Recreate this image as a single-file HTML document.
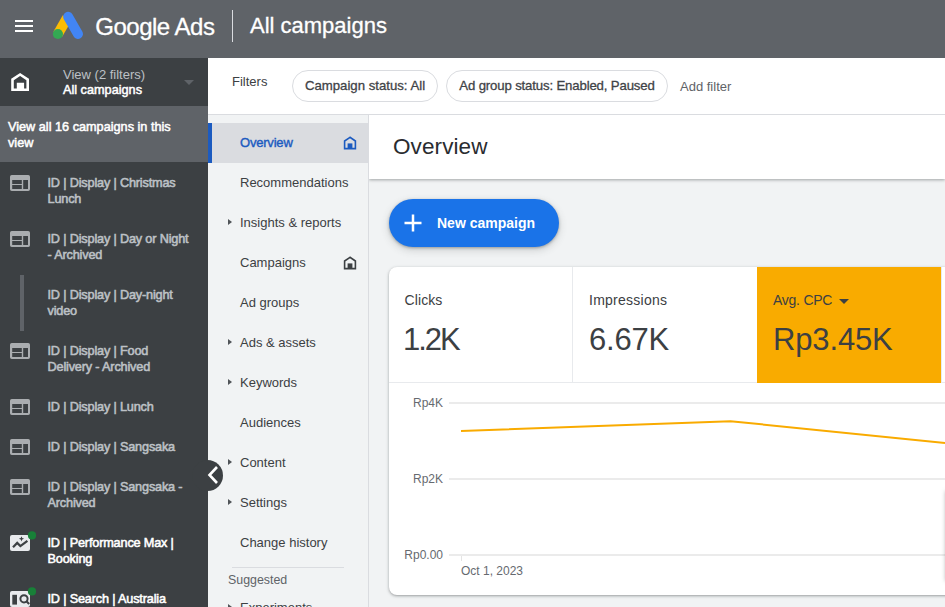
<!DOCTYPE html>
<html><head><meta charset="utf-8">
<style>
*{box-sizing:border-box;margin:0;padding:0}
html,body{width:945px;height:607px;overflow:hidden;background:#f1f3f4;font-family:"Liberation Sans",sans-serif;}
body{position:relative}
.abs{position:absolute}
#hdr{left:0;top:0;width:945px;height:58px;background:#5f6368}
#side{left:0;top:58px;width:208px;height:549px;background:#3c4043}
#banner{left:0;top:48px;width:208px;height:56px;background:#5f6368;color:#fff;font-size:12.7px;-webkit-text-stroke:.5px;line-height:16px;padding:13px 8px;white-space:nowrap}
.t{position:absolute;white-space:nowrap;transform-origin:0 0}
.ci{position:absolute;left:47.5px;margin-top:1px;letter-spacing:-.17px;font-size:12.7px;-webkit-text-stroke:.55px;line-height:16px;color:#bdc1c6;white-space:nowrap}
.ci.w{color:#fff}
#filters{left:208px;top:58px;width:737px;height:57px;background:#fff;border-bottom:1px solid #dadce0}
.chip{position:absolute;top:12px;height:32px;border:1px solid #dadce0;border-radius:16px;font-size:13.2px;letter-spacing:-.15px;-webkit-text-stroke:.3px;color:#3f4347;line-height:30.5px;text-align:center;white-space:nowrap}
#nav{left:208px;top:115px;width:161px;height:492px;background:#f1f3f4;border-right:1px solid #dadce0}
.ni{position:absolute;left:32px;margin-top:1px;font-size:13px;color:#3c4043;white-space:nowrap;line-height:16px}
.tri{position:absolute;left:20.2px;margin-top:1.5px;width:0;height:0;border-left:4.2px solid #505458;border-top:3.5px solid transparent;border-bottom:3.5px solid transparent}
.m1{font-size:14px;line-height:16px;color:#3c4043}
.m2{font-size:31px;line-height:36px;color:#3c4043}
.gl{left:80px;width:496px;height:2px;background:#ebebeb}
.ax{font-size:12px;line-height:14px;color:#666a6f}
</style></head><body>
<div id="hdr" class="abs">
  <svg class="abs" style="left:12px;top:14px" width="24" height="24" viewBox="0 0 24 24"><path fill="#fff" d="M3 6h18v2H3zM3 11h18v2H3zM3 16h18v2H3z"/></svg>
  <svg class="abs" style="left:52px;top:11px" width="34" height="30" viewBox="0 0 34 30">
    <path d="M5.9 23 L15.2 6.9" stroke="#fbbc04" stroke-width="10.2" fill="none"/>
    <path d="M16.1 5.7 L26 23" stroke="#4285f4" stroke-width="9.9" stroke-linecap="round" fill="none"/>
    <circle cx="5.9" cy="23" r="5.1" fill="#34a853"/>
  </svg>
  <div class="t" id="ga" style="left:95.3px;top:12.7px;letter-spacing:-.5px;-webkit-text-stroke:.3px;font-size:24px;line-height:28px;color:#fff">Google Ads</div>
  <div class="abs" style="left:232px;top:10px;width:1px;height:32px;background:#dadce0"></div>
  <div class="t" id="ac" style="left:250px;top:12px;-webkit-text-stroke:.3px;font-size:22px;line-height:28px;color:#fff">All campaigns</div>
</div>
<div id="side" class="abs">
  <svg class="abs" style="left:0;top:0" width="40" height="48" viewBox="0 0 40 48"><path fill="#fff" fill-rule="evenodd" d="M20.1 14.9 L29 20.8 V33 H11.2 V20.8 Z M20.1 18.1 L13.8 22.2 V30.4 H16.8 V24.7 H24.1 V30.4 H26.4 V22.2 Z"/></svg>
  <div class="t" style="left:63px;top:9px;font-size:13px;line-height:16px;color:#bdc1c6">View (2 filters)</div>
  <div class="t" style="left:63px;top:24px;font-size:12.7px;line-height:16px;color:#fff;-webkit-text-stroke:.5px">All campaigns</div>
  <div class="abs" style="left:183.5px;top:22px;width:0;height:0;border-top:5px solid #5f6368;border-left:5px solid transparent;border-right:5px solid transparent"></div>
  <div id="banner" class="abs">View all 16 campaigns in this<br>view</div>
<div class="ci" style="top:116px">ID | Display | Christmas<br>Lunch</div>
<svg class="abs" style="left:10px;top:117px" width="20" height="16" viewBox="0 0 20 16"><path fill="#aaadb0" fill-rule="evenodd" d="M1.8 0h16.4a1.8 1.8 0 0 1 1.8 1.8v12.4a1.8 1.8 0 0 1-1.8 1.8H1.8a1.8 1.8 0 0 1-1.8-1.8V1.8a1.8 1.8 0 0 1 1.8-1.8zM2.2 5.1v4h9.6v-4zM2.2 10.1v3.8h9.6v-3.8zM13.2 5.1v8.8H18V5.1z"/></svg>
<div class="ci" style="top:172px">ID | Display | Day or Night<br>- Archived</div>
<svg class="abs" style="left:10px;top:173px" width="20" height="16" viewBox="0 0 20 16"><path fill="#aaadb0" fill-rule="evenodd" d="M1.8 0h16.4a1.8 1.8 0 0 1 1.8 1.8v12.4a1.8 1.8 0 0 1-1.8 1.8H1.8a1.8 1.8 0 0 1-1.8-1.8V1.8a1.8 1.8 0 0 1 1.8-1.8zM2.2 5.1v4h9.6v-4zM2.2 10.1v3.8h9.6v-3.8zM13.2 5.1v8.8H18V5.1z"/></svg>
<div class="ci" style="top:228px">ID | Display | Day-night<br>video</div>
<div class="abs" style="left:20px;top:217px;width:4px;height:56px;background:#5f6368"></div>
<div class="ci" style="top:284px">ID | Display | Food<br>Delivery - Archived</div>
<svg class="abs" style="left:10px;top:285px" width="20" height="16" viewBox="0 0 20 16"><path fill="#aaadb0" fill-rule="evenodd" d="M1.8 0h16.4a1.8 1.8 0 0 1 1.8 1.8v12.4a1.8 1.8 0 0 1-1.8 1.8H1.8a1.8 1.8 0 0 1-1.8-1.8V1.8a1.8 1.8 0 0 1 1.8-1.8zM2.2 5.1v4h9.6v-4zM2.2 10.1v3.8h9.6v-3.8zM13.2 5.1v8.8H18V5.1z"/></svg>
<div class="ci" style="top:340px">ID | Display | Lunch</div>
<svg class="abs" style="left:10px;top:341px" width="20" height="16" viewBox="0 0 20 16"><path fill="#aaadb0" fill-rule="evenodd" d="M1.8 0h16.4a1.8 1.8 0 0 1 1.8 1.8v12.4a1.8 1.8 0 0 1-1.8 1.8H1.8a1.8 1.8 0 0 1-1.8-1.8V1.8a1.8 1.8 0 0 1 1.8-1.8zM2.2 5.1v4h9.6v-4zM2.2 10.1v3.8h9.6v-3.8zM13.2 5.1v8.8H18V5.1z"/></svg>
<div class="ci" style="top:380px">ID | Display | Sangsaka</div>
<svg class="abs" style="left:10px;top:381px" width="20" height="16" viewBox="0 0 20 16"><path fill="#aaadb0" fill-rule="evenodd" d="M1.8 0h16.4a1.8 1.8 0 0 1 1.8 1.8v12.4a1.8 1.8 0 0 1-1.8 1.8H1.8a1.8 1.8 0 0 1-1.8-1.8V1.8a1.8 1.8 0 0 1 1.8-1.8zM2.2 5.1v4h9.6v-4zM2.2 10.1v3.8h9.6v-3.8zM13.2 5.1v8.8H18V5.1z"/></svg>
<div class="ci" style="top:420px">ID | Display | Sangsaka -<br>Archived</div>
<svg class="abs" style="left:10px;top:421px" width="20" height="16" viewBox="0 0 20 16"><path fill="#aaadb0" fill-rule="evenodd" d="M1.8 0h16.4a1.8 1.8 0 0 1 1.8 1.8v12.4a1.8 1.8 0 0 1-1.8 1.8H1.8a1.8 1.8 0 0 1-1.8-1.8V1.8a1.8 1.8 0 0 1 1.8-1.8zM2.2 5.1v4h9.6v-4zM2.2 10.1v3.8h9.6v-3.8zM13.2 5.1v8.8H18V5.1z"/></svg>
<div class="ci w" style="top:476px">ID | Performance Max |<br>Booking</div>
<svg class="abs" style="left:10px;top:473px" width="28" height="24" viewBox="0 0 28 24"><rect x="0" y="4" width="20" height="16" rx="2" fill="#e8eaed"/><path d="M3 16.2 L7.2 11.9 L10.4 15.1 L17.4 9.8" fill="none" stroke="#3c4043" stroke-width="2.2"/><path d="M11.5 5.2 l.75 1.85 1.85.75 -1.85.75 -.75 1.85 -.75-1.85 -1.85-.75 1.85-.75z" fill="#3c4043"/><circle cx="22" cy="4.4" r="4.1" fill="#188038"/></svg>
<div class="ci w" style="top:532px">ID | Search | Australia</div>
<svg class="abs" style="left:10px;top:529px" width="28" height="24" viewBox="0 0 28 24"><rect x="0" y="4" width="20" height="16" rx="2" fill="#e8eaed"/><rect x="2.3" y="7.8" width="4.7" height="9.8" fill="#3c4043"/><circle cx="14" cy="11.8" r="3.6" fill="none" stroke="#3c4043" stroke-width="2"/><path d="M16.4 14.2 L19.2 17" stroke="#3c4043" stroke-width="2.2"/><circle cx="22" cy="4.4" r="4.1" fill="#188038"/></svg>
</div>
<div id="filters" class="abs">
  <div class="t" style="left:24px;top:16px;font-size:13px;line-height:16px;color:#3c4043">Filters</div>
  <div class="chip" style="left:84px;width:146px;letter-spacing:0">Campaign status: All</div>
  <div class="chip" style="left:238px;width:222px">Ad group status: Enabled, Paused</div>
  <div class="t" style="left:472px;top:21px;font-size:13px;line-height:16px;color:#5f6368">Add filter</div>
</div>
<div id="nav" class="abs">
<div class="abs" style="left:0;top:8px;width:160px;height:40px;background:#dadce0"></div><div class="abs" style="left:0;top:8px;width:4px;height:40px;background:#1c5bc0"></div>
<div class="ni" style="top:19px;color:#1c5bc0;letter-spacing:-.2px;-webkit-text-stroke:.4px">Overview</div>
<div class="ni" style="top:59px">Recommendations</div>
<div class="ni" style="top:99px">Insights &amp; reports</div>
<div class="tri" style="top:102px"></div>
<div class="ni" style="top:139px">Campaigns</div>
<div class="ni" style="top:179px">Ad groups</div>
<div class="ni" style="top:219px">Ads &amp; assets</div>
<div class="tri" style="top:222px"></div>
<div class="ni" style="top:259px">Keywords</div>
<div class="tri" style="top:262px"></div>
<div class="ni" style="top:299px">Audiences</div>
<div class="ni" style="top:339px">Content</div>
<div class="tri" style="top:342px"></div>
<div class="ni" style="top:379px">Settings</div>
<div class="tri" style="top:382px"></div>
<div class="ni" style="top:419px">Change history</div>
<div class="ni" style="top:484px">Experiments</div>
<div class="tri" style="top:487px"></div>
<svg class="abs" style="left:135px;top:21px" width="14" height="14" viewBox="0 0 14 14"><path d="M7 1.3 L1.6 5 V12.6 H12.4 V5 Z" fill="none" stroke="#1c5bc0" stroke-width="1.6"/><rect x="4.6" y="7.4" width="4.8" height="5.2" fill="#1c5bc0"/></svg>
<svg class="abs" style="left:135px;top:141px" width="14" height="14" viewBox="0 0 14 14"><path d="M7 1.3 L1.6 5 V12.6 H12.4 V5 Z" fill="none" stroke="#3c4043" stroke-width="1.6"/><rect x="4.6" y="7.4" width="4.8" height="5.2" fill="#3c4043"/></svg>
<div class="abs" style="left:24px;top:452px;width:112px;height:1px;background:#dadce0"></div>
<div class="ni" style="left:20px;top:456px;color:#5f6368;font-size:12.4px">Suggested</div>
</div>
<div class="abs" style="left:191.5px;top:459.5px;width:31px;height:31px;background:#3c4043;border-radius:50%"></div>
<svg class="abs" style="left:206px;top:465px" width="14" height="20" viewBox="0 0 14 20"><path d="M11 2 L3.5 10 L11 18" fill="none" stroke="#fff" stroke-width="2.6"/></svg>
<div id="main" class="abs" style="left:369px;top:115px;width:576px;height:492px;overflow:hidden">
<div class="abs" style="left:0;top:0;width:576px;height:64px;background:#fff;box-shadow:0 1px 3px rgba(60,64,67,.45)"></div>
<div class="t" id="ov" style="left:24px;top:17.8px;font-size:22.5px;letter-spacing:.1px;line-height:28px;color:#2a2c30">Overview</div>
<div class="abs" style="left:20px;top:84px;width:170px;height:48px;border-radius:24px;background:#1a73e8;box-shadow:0 1px 3px rgba(60,64,67,.4),0 3px 8px rgba(60,64,67,.2)"></div>
<svg class="abs" style="left:35px;top:99px" width="18" height="18" viewBox="0 0 18 18"><path d="M9 0.5V17.5M0.5 9H17.5" stroke="#fff" stroke-width="2.5" fill="none"/></svg>
<div class="t" id="nc" style="left:68px;top:99px;font-size:14px;line-height:18px;color:#fff;font-weight:bold">New campaign</div>
<div class="abs" style="left:20px;top:152px;width:600px;height:328px;background:#fff;border-radius:8px;box-shadow:0 1px 2px rgba(60,64,67,.3),0 1px 3px 1px rgba(60,64,67,.15)"></div>
<div class="abs" style="left:20px;top:267px;width:556px;height:1px;background:#e8eaed"></div>
<div class="abs" style="left:203px;top:152px;width:1px;height:115px;background:#e8eaed"></div>
<div class="abs" style="left:388px;top:152px;width:184px;height:116px;background:#f9ab00"></div>
<div class="abs" style="left:572px;top:152px;width:1px;height:115px;background:#e8eaed"></div>
<div class="t m1" style="left:35.5px;top:177px;letter-spacing:.1px">Clicks</div>
<div class="t m2" style="left:34px;top:207px;letter-spacing:-2px">1.2K</div>
<div class="t m1" style="left:220px;top:177px;letter-spacing:.25px">Impressions</div>
<div class="t m2" style="left:220px;top:207px;letter-spacing:-.2px">6.67K</div>
<div class="t m1" style="left:404px;top:177px;letter-spacing:-.25px">Avg. CPC</div>
<div class="abs" style="left:470px;top:183.5px;width:0;height:0;border-top:5px solid #3c4043;border-left:5px solid transparent;border-right:5px solid transparent"></div>
<div class="t m2" style="left:404px;top:207px;letter-spacing:-.15px">Rp3.45K</div>
<div class="abs gl" style="top:287px"></div>
<div class="abs gl" style="top:363px"></div>
<div class="abs gl" style="top:439px"></div>
<div class="abs" style="left:91.5px;top:441px;width:1.5px;height:4.5px;background:#e4e4e4"></div>
<div class="t ax" style="left:0;width:74px;text-align:right;top:281px">Rp4K</div>
<div class="t ax" style="left:0;width:74px;text-align:right;top:357px">Rp2K</div>
<div class="t ax" style="left:0;width:74px;text-align:right;top:433px">Rp0.00</div>
<div class="t ax" style="left:92px;top:449px">Oct 1, 2023</div>
<svg class="abs" style="left:0;top:0" width="576" height="492"><path d="M92 316 L361.5 306.2 L576 328" fill="none" stroke="#f9ab00" stroke-width="2"/></svg>
<div class="abs" style="left:576.5px;top:376px;width:10px;height:90px;background:#fff;box-shadow:0 0 4px rgba(60,64,67,.5)"></div>
</div>
</body></html>
